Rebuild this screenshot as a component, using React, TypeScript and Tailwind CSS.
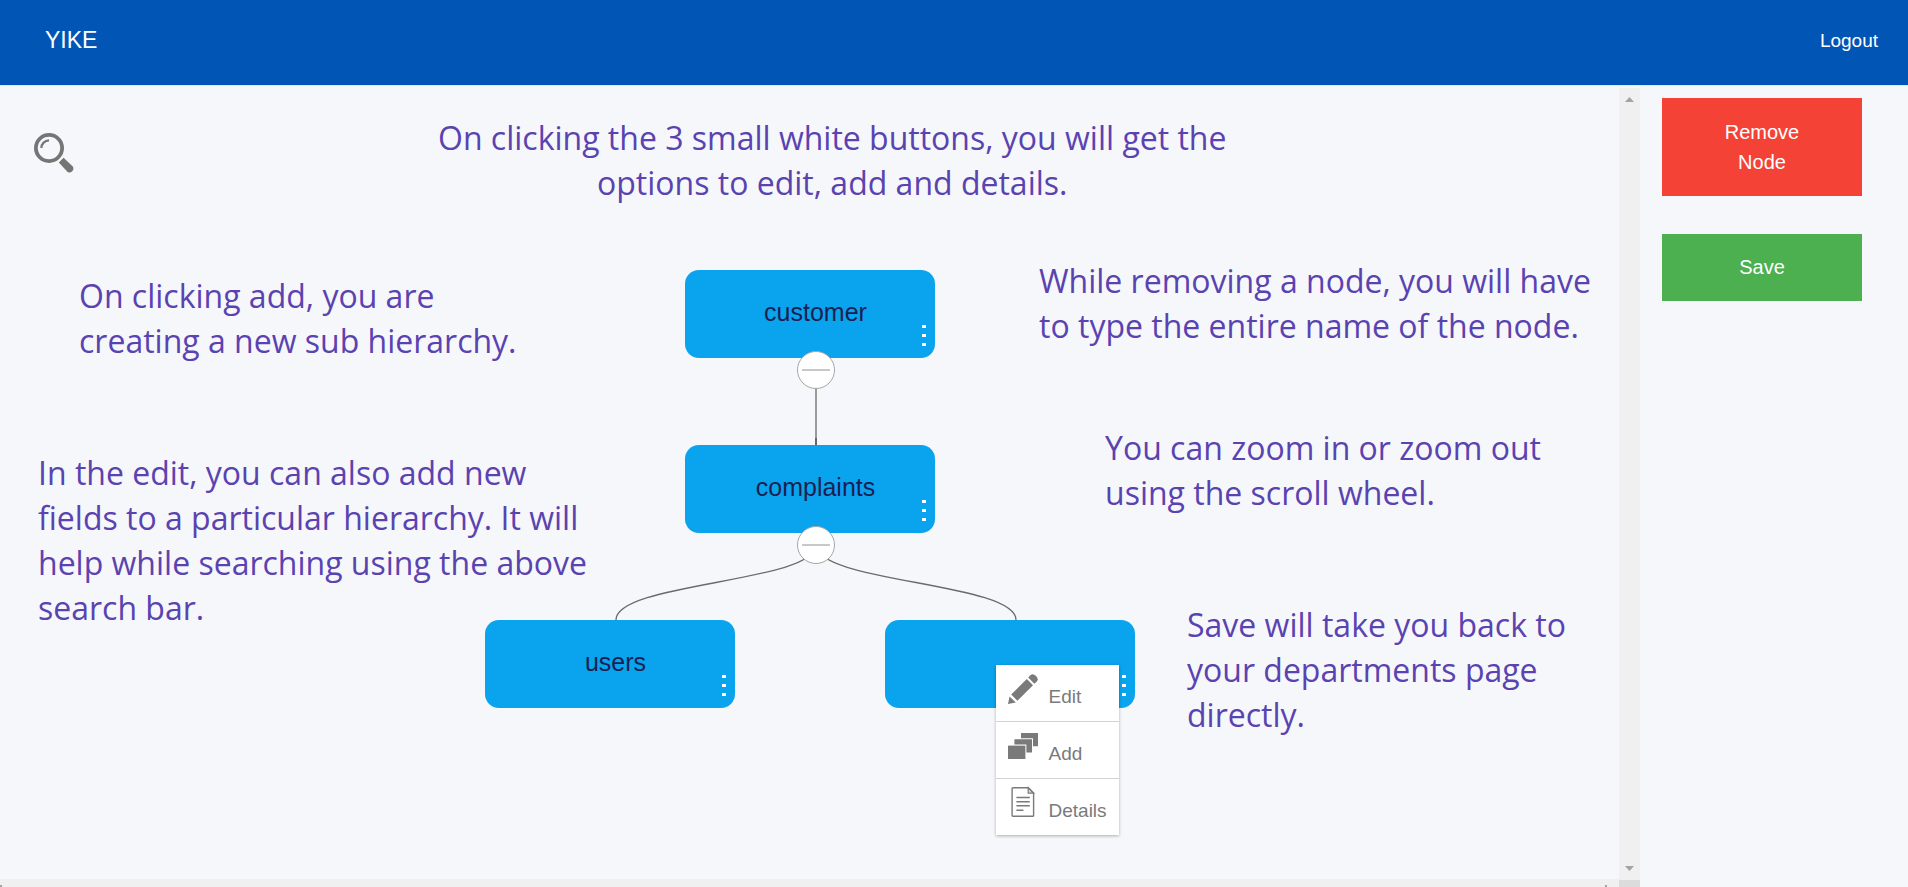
import type { ReactNode } from "react";

const noteBase =
  "absolute whitespace-pre font-['Open_Sans','Noto_Sans',sans-serif] text-[32px] leading-[45px] text-[#5a43b0]";

function Note({ className, lines }: { className: string; lines: string[] }) {
  return <p className={`${noteBase} ${className}`}>{lines.join("\n")}</p>;
}

function OrgNode({ name, className }: { name: string; className: string }) {
  return (
    <div
      className={`absolute flex h-[88px] w-[250px] items-center justify-center rounded-[14px] bg-[#0aa3ed] pb-1 pl-3 text-[25px] leading-none text-[#1b1f52] ${className}`}
    >
      <span>{name}</span>
      <button
        type="button"
        aria-label="Node options"
        className="absolute right-[9px] bottom-3 flex flex-col gap-[6px]"
      >
        <span className="h-[3px] w-1 bg-white" />
        <span className="h-[3px] w-1 bg-white" />
        <span className="h-[3px] w-1 bg-white" />
      </button>
    </div>
  );
}

function Toggle({ className }: { className: string }) {
  return (
    <button
      type="button"
      aria-label="Collapse"
      className={`absolute left-[312px] flex size-[38px] items-center justify-center rounded-full border border-[#a6a6a6] bg-white ${className}`}
    >
      <span className="h-[2px] w-7 bg-[#c8c8c8]" />
    </button>
  );
}

function MenuItem({ icon, label }: { icon: ReactNode; label: string }) {
  return (
    <li>
      <button
        type="button"
        className="flex h-14 w-full items-start gap-[11px] pt-[9px] pl-3 text-left text-[19px] text-[#7a7a7a]"
      >
        {icon}
        <span className="pt-3 leading-[22px]">{label}</span>
      </button>
    </li>
  );
}

function SearchIcon() {
  return (
    <svg width="40" height="40" viewBox="0 0 40 40" fill="none">
      <circle cx="15" cy="15" r="13.1" stroke="#757575" strokeWidth="3.8" />
      <path d="M7.4 15A7.6 7.6 0 0 1 15 7.4" stroke="#757575" strokeWidth="2.2" />
      <path
        d="M29.6 24.8 38.8 33.6A3.9 3.9 0 0 1 33.6 39L24.8 29.6Z"
        fill="#757575"
      />
    </svg>
  );
}

function PencilIcon() {
  return (
    <svg width="30" height="30" viewBox="0 0 30 30" fill="#7a7a7a">
      <path d="M0 30 1.6 22.4 7.8 28.6Z" />
      <path d="M3.2 20.6 18.8 5 25 11.2 9.4 26.8Z" />
      <path d="M20.2 3.6 22.4 1.2Q25-1 28 2 31 5 28.8 7.6L26.4 9.8Z" />
    </svg>
  );
}

function StackIcon() {
  return (
    <svg width="30" height="30" viewBox="0 0 30 30" fill="#7a7a7a">
      <path d="M13 2H30V15.3H25V7.2H13Z" />
      <path d="M6.4 8.2H24V21.4H18.4V13.4H6.4Z" />
      <path d="M0 14.6H17.4V28H0Z" />
    </svg>
  );
}

function DocumentIcon() {
  return (
    <svg
      className="overflow-visible"
      width="30"
      height="30"
      viewBox="0 1 30 30"
      fill="none"
      stroke="#7a7a7a"
    >
      <path
        d="M5 .7H20.4L25.6 6V28.4Q25.6 29.3 24.7 29.3H5Q4.1 29.3 4.1 28.4V1.6Q4.1.7 5 .7Z"
        strokeWidth="1.4"
      />
      <path d="M20.2.9V6.2H25.6Z" fill="#dcdcdc" strokeWidth="1.2" />
      <path d="M8.4 10.5H21.8M8.4 14.7H21.8M8.4 18.8H21.8M8.4 23.2H15.4" strokeWidth="1.5" />
    </svg>
  );
}

export default function App() {
  return (
    <div className="flex h-screen flex-col overflow-hidden bg-[#f5f7fb] font-['Liberation_Sans',Arial,sans-serif]">
      <header className="flex h-[85px] shrink-0 justify-between bg-[#0055b5] px-[30px] text-white">
        <a href="#" className="pt-[26px] pl-[15px] text-[23px] leading-7">
          YIKE
        </a>
        <a href="#" className="pt-[26px] text-[19px] leading-[29px]">
          Logout
        </a>
      </header>

      <div className="flex min-h-0 flex-1 border-t border-[#e4e7ee]">
        <div className="flex min-w-0 flex-1 flex-col">
          <main className="relative min-h-0 flex-1 overflow-hidden">
            <button type="button" aria-label="Search" className="absolute top-[47px] left-[34px]">
              <SearchIcon />
            </button>

            <div className="relative mx-auto h-full w-[650px]">
              <svg
                className="absolute top-0 left-0"
                width="650"
                height="560"
                viewBox="0 0 650 560"
                fill="none"
              >
                <path d="M331 290V352" stroke="#9a9a9a" strokeWidth="2" />
                <path d="M331 352V360" stroke="#666666" strokeWidth="2" />
                <path
                  d="M331 459C331 496.500 131 496.500 131 534M331 459C331 496.500 531 496.500 531 534"
                  stroke="#6b6b6b"
                  strokeWidth="1.3"
                />
              </svg>
              <OrgNode name="customer" className="top-[184px] left-[200px]" />
              <OrgNode name="complaints" className="top-[359px] left-[200px]" />
              <OrgNode name="users" className="top-[534px] left-0" />
              <OrgNode name="" className="top-[534px] left-[400px]" />
              <Toggle className="top-[265px]" />
              <Toggle className="top-[440px]" />

              <ul className="absolute top-[579px] left-[511px] w-[123px] divide-y divide-[#d2d2d2] bg-white shadow-[0_1px_3px_rgba(0,0,0,0.3)]">
                <MenuItem icon={<PencilIcon />} label="Edit" />
                <MenuItem icon={<StackIcon />} label="Add" />
                <MenuItem icon={<DocumentIcon />} label="Details" />
              </ul>
            </div>

            <Note
              className="top-[29px] left-[438px] text-center"
              lines={[
                "On clicking the 3 small white buttons, you will get the",
                "options to edit, add and details.",
              ]}
            />
            <Note
              className="top-[187px] left-[79px]"
              lines={["On clicking add, you are", "creating a new sub hierarchy."]}
            />
            <Note
              className="top-[364px] left-[38px]"
              lines={[
                "In the edit, you can also add new",
                "fields to a particular hierarchy. It will",
                "help while searching using the above",
                "search bar.",
              ]}
            />
            <Note
              className="top-[172px] left-[1039px]"
              lines={[
                "While removing a node, you will have",
                "to type the entire name of the node.",
              ]}
            />
            <Note
              className="top-[339px] left-[1105px]"
              lines={["You can zoom in or zoom out", "using the scroll wheel."]}
            />
            <Note
              className="top-[516px] left-[1187px]"
              lines={["Save will take you back to", "your departments page", "directly."]}
            />
          </main>
          <div className="flex h-2 shrink-0 items-end justify-between bg-[#f0f0f0] pr-3">
            <span className="size-[2px] bg-[#a3a3a3]" />
            <span className="size-[2px] bg-[#a3a3a3]" />
          </div>
        </div>

        <div className="flex w-[21px] shrink-0 flex-col pt-[2px]">
          <div className="flex flex-1 flex-col items-center justify-between bg-[#f0f0f0] py-[9px]">
            <svg width="9" height="5" viewBox="0 0 9 5" fill="#a3a3a3">
              <path d="M0 5 4.500 0 9 5Z" />
            </svg>
            <svg width="9" height="5" viewBox="0 0 9 5" fill="#a3a3a3">
              <path d="M0 0H9L4.500 5Z" />
            </svg>
          </div>
          <div className="h-[7px] bg-[#dcdcdc]" />
        </div>

        <aside className="flex w-[268px] shrink-0 flex-col gap-[38px] pt-3 pr-[46px] pl-[22px] text-[20px] leading-[30px] text-white">
          <button type="button" className="bg-[#f44336] px-12 pt-[19px] pb-[19px]">
            Remove Node
          </button>
          <button type="button" className="bg-[#4caf50] px-12 pt-[18px] pb-[19px]">
            Save
          </button>
        </aside>
      </div>
    </div>
  );
}
